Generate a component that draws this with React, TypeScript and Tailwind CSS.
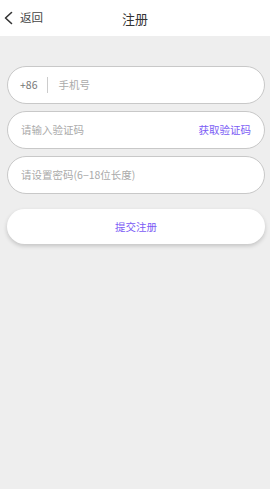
import React, { useState } from 'react';

export default function App() {
  const [phone, setPhone] = useState('');
  const [code, setCode] = useState('');
  const [password, setPassword] = useState('');

  return (
    <div
      className="w-[270px] h-[489px] bg-[#eeeeee] flex flex-col"
      style={{ fontFamily: '"Noto Sans CJK SC", "Noto Sans", sans-serif' }}
    >
      {/* Header */}
      <div className="h-[36px] bg-white flex items-center relative flex-shrink-0">
        <button className="flex items-center pl-[3px] gap-[6px]">
          <svg width="11" height="14" viewBox="0 0 11 14" fill="none">
            <path d="M8.5 1.5 L2.5 7 L8.5 12.5" stroke="#333" strokeWidth="1.6" strokeLinecap="round" strokeLinejoin="round" />
          </svg>
          <span className="text-[11.5px] text-[#444] leading-none">返回</span>
        </button>
        <h1 className="absolute left-1/2 -translate-x-1/2 text-[13px] text-[#333] leading-none">注册</h1>
      </div>

      {/* Form */}
      <div className="flex flex-col pl-[7px] pr-[5px] pt-[30px] gap-[7px]">
        <div className="h-[38px] bg-white rounded-full border border-[#c8c8c8] flex items-center px-[12px]">
          <span className="text-[10.5px] text-[#777]">+86</span>
          <div className="w-px h-[16px] bg-[#cccccc] mx-[10px]" />
          <input
            value={phone}
            onChange={(e) => setPhone(e.target.value)}
            placeholder="手机号"
            className="flex-1 min-w-0 bg-transparent text-[10.5px] text-[#333] placeholder-[#aaaaaa] outline-none"
          />
        </div>
        <div className="h-[38px] bg-white rounded-full border border-[#c8c8c8] flex items-center pl-[13px] pr-[13px]">
          <input
            value={code}
            onChange={(e) => setCode(e.target.value)}
            placeholder="请输入验证码"
            className="flex-1 min-w-0 bg-transparent text-[10.5px] text-[#333] placeholder-[#aaaaaa] outline-none"
          />
          <button className="text-[10.5px] text-[#7b5cf5]">获取验证码</button>
        </div>
        <div className="h-[38px] bg-white rounded-full border border-[#c8c8c8] flex items-center px-[13px]">
          <input
            value={password}
            onChange={(e) => setPassword(e.target.value)}
            type="password"
            placeholder="请设置密码(6−18位长度)"
            className="flex-1 min-w-0 bg-transparent text-[10.5px] text-[#333] placeholder-[#aaaaaa] outline-none"
          />
        </div>
        <button className="mt-[8px] h-[35px] bg-white rounded-full shadow-[0_2px_4px_rgba(0,0,0,0.18)] text-[10.5px] text-[#7b5cf5]">
          提交注册
        </button>
      </div>
    </div>
  );
}
